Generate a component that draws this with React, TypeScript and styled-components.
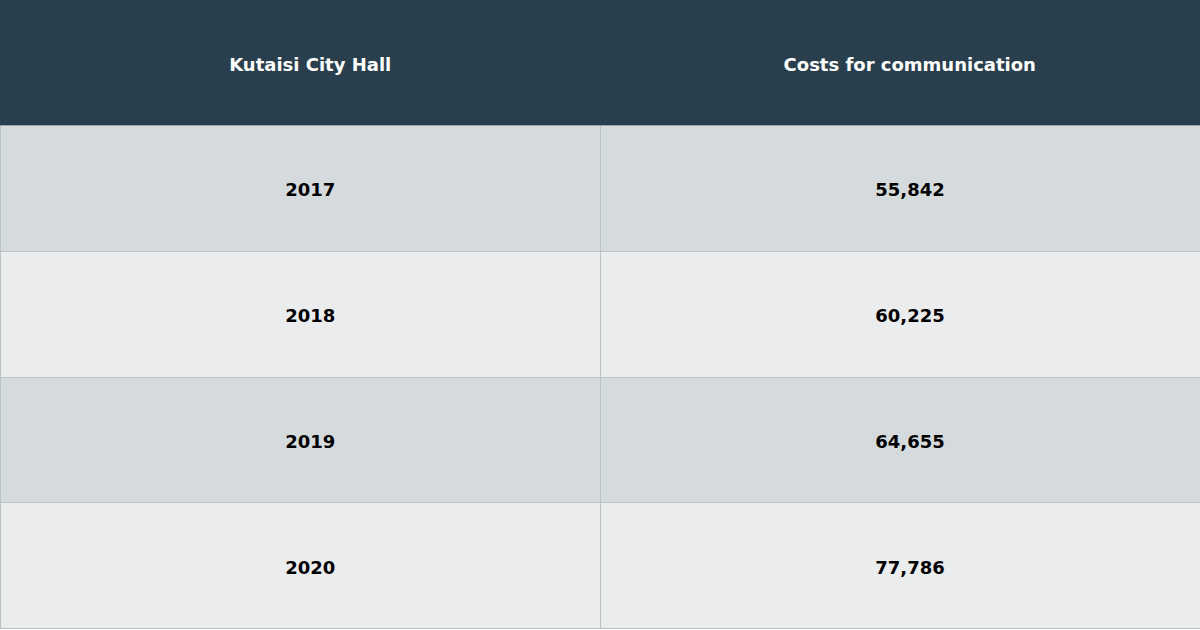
import styled, { createGlobalStyle } from "styled-components";

const rows = [
  { year: "2017", cost: "55,842" },
  { year: "2018", cost: "60,225" },
  { year: "2019", cost: "64,655" },
  { year: "2020", cost: "77,786" },
];

export default function App() {
  return (
    <>
      <GlobalStyle />
      <Table>
        <thead>
          <tr>
            <HeadCell>Kutaisi City Hall</HeadCell>
            <HeadCell>Costs for communication</HeadCell>
          </tr>
        </thead>
        <tbody>
          {rows.map((r, i) => (
            <Row key={r.year} $odd={i % 2 === 0}>
              <Cell>{r.year}</Cell>
              <Cell>{r.cost}</Cell>
            </Row>
          ))}
        </tbody>
      </Table>
    </>
  );
}

const GlobalStyle = createGlobalStyle`
  body {
    margin: 0;
    background: #ffffff;
    font-family: "DejaVu Sans", sans-serif;
  }
`;

const Table = styled.table`
  width: 1200px;
  border-collapse: collapse;
  table-layout: fixed;
  font-family: "DejaVu Sans", sans-serif;
  font-weight: bold;
  font-size: 18px;
  line-height: 22px;
`;

const HeadCell = styled.th`
  height: 125px;
  padding: 3px 0 0 20px;
  box-sizing: border-box;
  background: #2a3f4d;
  color: #ffffff;
  text-align: center;
  border: 1px solid #2a3f4d;
  border-bottom-color: #9aa5ab;
`;

const Row = styled.tr<{ $odd: boolean }>`
  background: ${(p) => (p.$odd ? "#d5dadd" : "#ebecee")};
`;

const Cell = styled.td`
  height: 125.75px;
  padding: 4px 0 0 20px;
  box-sizing: border-box;
  color: #000000;
  text-align: center;
  border: 1px solid #b9c4c2;
  border-top: none;
  &:last-child {
    border-right: none;
  }
`;
